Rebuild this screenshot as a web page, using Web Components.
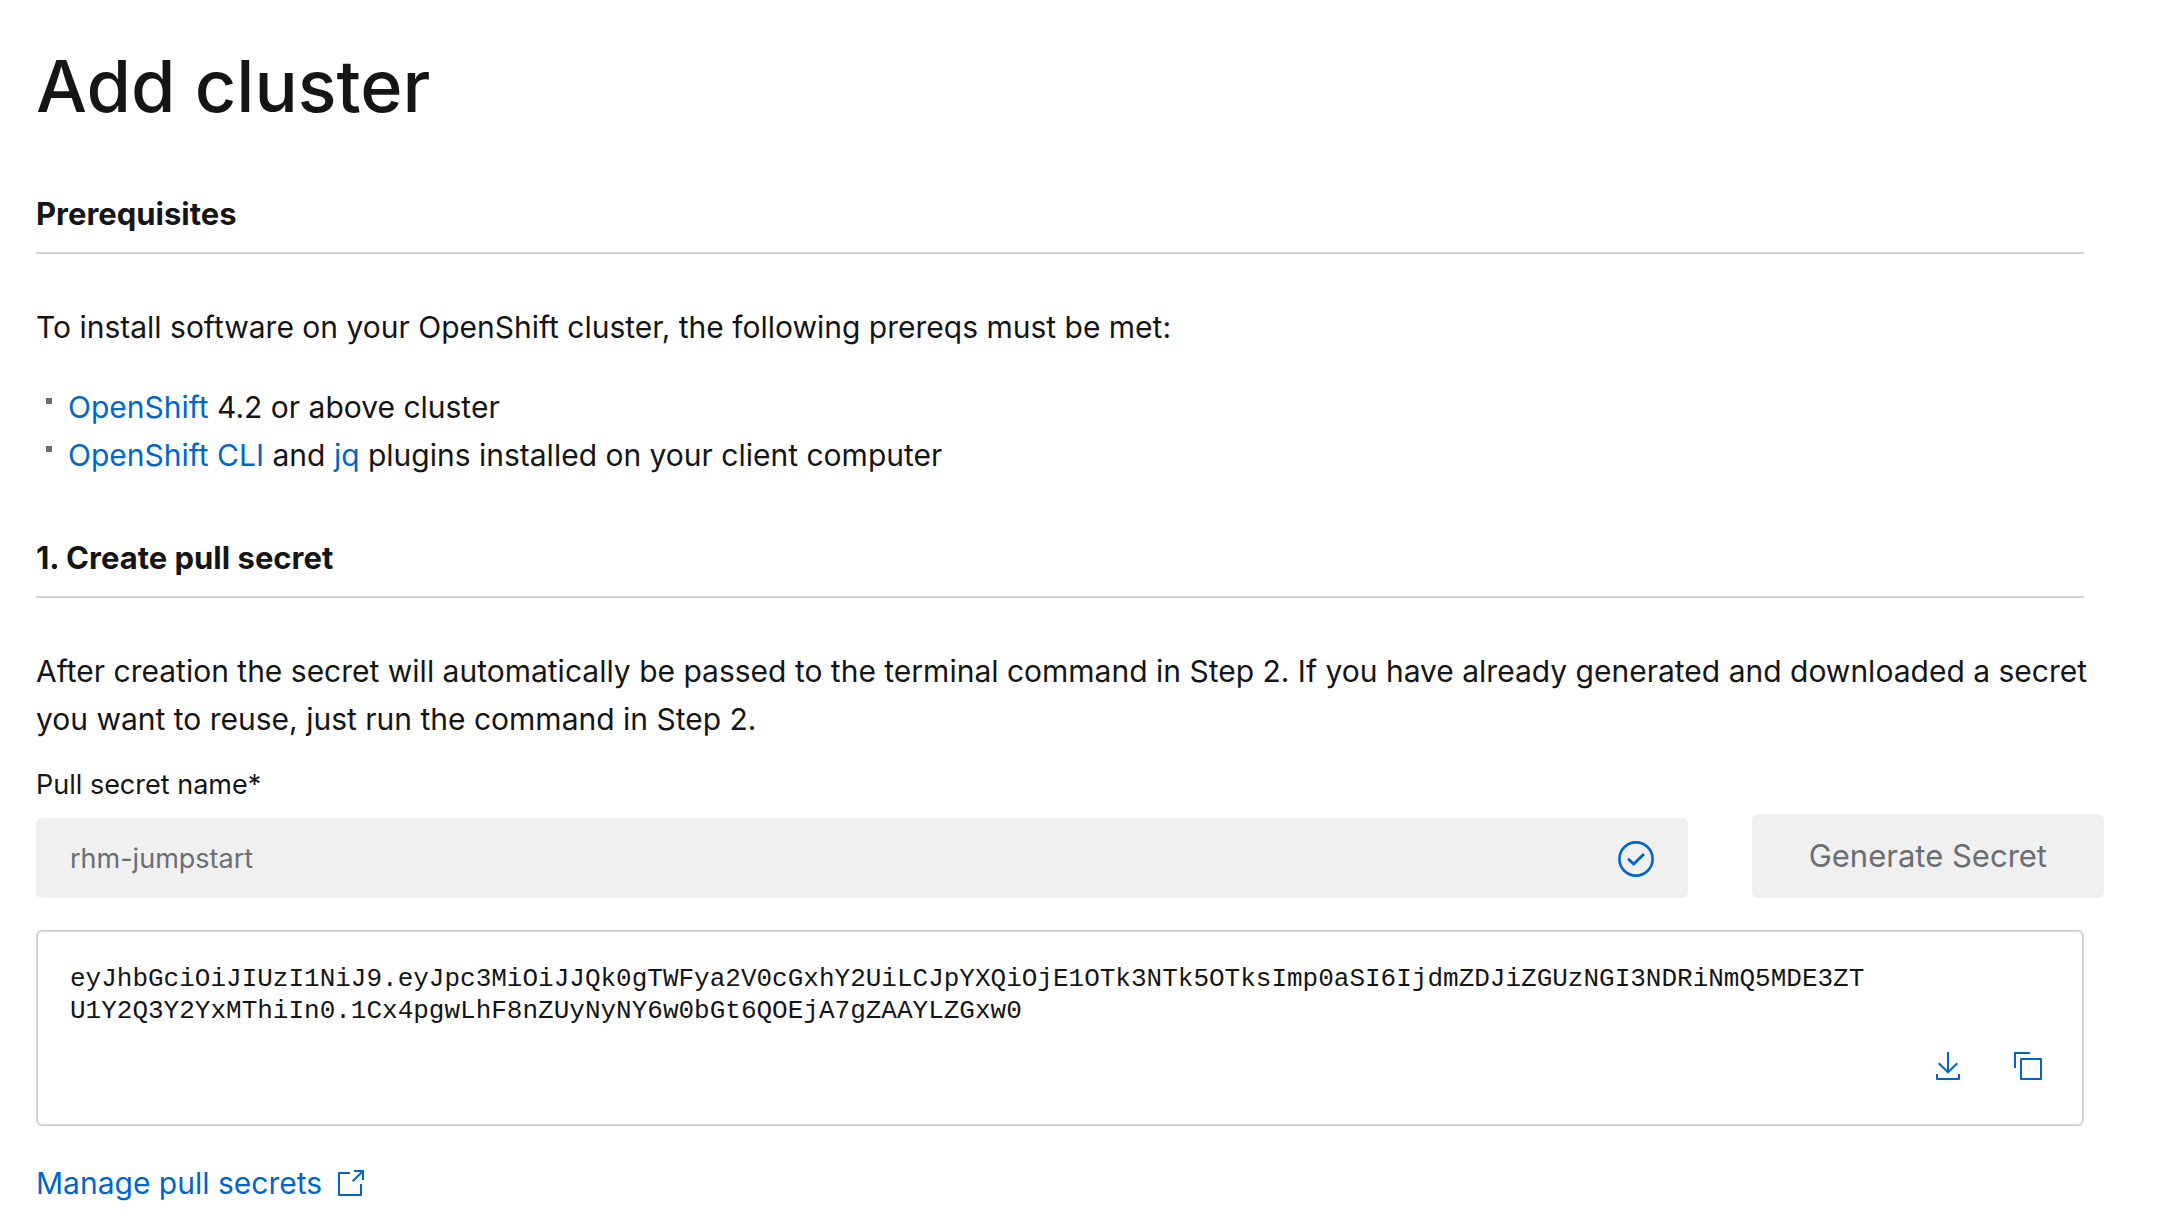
<!DOCTYPE html>
<html lang="en">
<head>
<meta charset="utf-8">
<meta name="viewport" content="width=device-width, initial-scale=1">
<title>Add cluster</title>
<style>
  body {
    margin: 0;
    background: #fff;
    color: #151515;
    font-family: Inter, "Liberation Sans", sans-serif;
    --link: #0066cc;
    --muted: #6a6e73;
    --line: #d2d2d2;
    --disabled: #f0f0f0;
  }
</style>
</head>
<body>
<add-cluster-page></add-cluster-page>

<script>
const define = (name, html) => {
  const template = document.createElement('template');
  template.innerHTML = html;
  customElements.define(name, class extends HTMLElement {
    constructor() {
      super();
      this.attachShadow({ mode: 'open' }).append(template.content.cloneNode(true));
    }
  });
};

define('page-section', `
  <style>
    :host { display: block; }
    h2 { margin: 0 0 49px; padding-bottom: 18px; border-bottom: 2px solid var(--line);
         font-size: 31px; line-height: 40px; font-weight: 700; }
  </style>
  <section>
    <h2><slot name="heading"></slot></h2>
    <slot></slot>
  </section>`);

define('bullet-item', `
  <style>
    :host { display: flex; gap: 16px; padding-left: 10px; }
    .mark { flex: none; width: 6px; height: 6px; margin-top: 15px; background: var(--muted); }
  </style>
  <span class="mark"></span>
  <span><slot></slot></span>`);

define('secret-form', `
  <style>
    :host { display: block; }
    form { display: flex; align-items: flex-end; gap: 64px; margin-right: -20px; }
    .field { flex: 1; min-width: 0; display: flex; flex-direction: column; gap: 15px; }
    label { font-size: 27px; line-height: 36px; }
    .box { display: flex; align-items: center; height: 80px; padding: 0 34px;
           box-sizing: border-box; border-radius: 6px; background: var(--disabled); }
    input { flex: 1; min-width: 0; height: 100%; padding: 0; border: 0; background: none;
            font: 27px Inter, "Liberation Sans", sans-serif; color: var(--muted); }
    svg { flex: none; width: 36px; height: 36px; fill: none; stroke: var(--link); overflow: visible; }
    button { flex: none; height: 84px; padding: 0 57px 2px; border: 0; border-radius: 6px;
             background: var(--disabled); color: var(--muted);
             font: 31px Inter, "Liberation Sans", sans-serif; }
  </style>
  <form>
    <div class="field">
      <label for="secret-name">Pull secret name*</label>
      <div class="box">
        <input id="secret-name" type="text" value="rhm-jumpstart" disabled>
        <svg viewBox="0 0 36 36" aria-hidden="true">
          <circle cx="18" cy="19" r="16.6" stroke-width="2.6"/>
          <path d="M10 18.8l5.7 5.2L26 14" stroke-width="2.8"/>
        </svg>
      </div>
    </div>
    <button type="button" disabled>Generate Secret</button>
  </form>`);

define('secret-output', `
  <style>
    :host { display: block; border: 2px solid var(--line); border-radius: 6px; padding: 31px 38px 42px 32px; }
    code { display: block; max-width: 115ch; word-break: break-all;
           font: 26px/32px "Liberation Mono", monospace; }
    .actions { display: flex; justify-content: flex-end; gap: 48px; margin-top: 23px; }
    button { display: block; padding: 0; border: 0; background: none; cursor: pointer; }
    svg { display: block; width: 32px; height: 32px; fill: none; stroke: var(--link); stroke-width: 2; stroke-linejoin: round; }
  </style>
  <code><slot></slot></code>
  <div class="actions">
    <button type="button" aria-label="Download">
      <svg viewBox="0 0 32 32"><path d="M16 2v20M6.7 13.3L16 22.3l9.3-9M5 24v5h22v-5"/></svg>
    </button>
    <button type="button" aria-label="Copy">
      <svg viewBox="0 0 32 32"><path d="M9 9h20v20H9zM3 18V3h15"/></svg>
    </button>
  </div>`);

define('external-link', `
  <style>
    :host { display: block; }
    a { display: inline-flex; align-items: center; gap: 14px; color: var(--link); text-decoration: none; }
    svg { flex: none; width: 32px; height: 32px; fill: none; stroke: currentColor; stroke-width: 2; }
  </style>
  <a href="#secrets"><slot></slot>
    <svg viewBox="0 0 32 32" aria-hidden="true">
      <path d="M14 6H3v22h22V17" stroke-linejoin="round"/>
      <path d="M18 4h9v9M27 4L16.7 14.3"/>
    </svg>
  </a>`);

define('add-cluster-page', `
  <style>
    :host { display: block; padding: 42px 78px 0 36px; font-size: 30px; line-height: 48px; }
    h1 { margin: 0 0 64px; font-size: 72px; line-height: 88px; font-weight: 500; }
    p { margin: 0 -20px 0 0; }
    a { color: var(--link); text-decoration: none; }
    .list { margin-top: 32px; }
    page-section + page-section { margin-top: 59px; }
    secret-form { margin-top: 24px; }
    secret-output { margin-top: 32px; }
    external-link { margin-top: 33px; }
  </style>
  <main>
    <h1>Add cluster</h1>
    <page-section>
      <span slot="heading">Prerequisites</span>
      <p>To install software on your OpenShift cluster, the following prereqs must be met:</p>
      <div class="list" role="list">
        <bullet-item role="listitem"><a href="#openshift">OpenShift</a> 4.2 or above cluster</bullet-item>
        <bullet-item role="listitem"><a href="#cli">OpenShift CLI</a> and <a href="#jq">jq</a> plugins installed on your client computer</bullet-item>
      </div>
    </page-section>
    <page-section>
      <span slot="heading">1. Create pull secret</span>
      <p>After creation the secret will automatically be passed to the terminal command in Step 2. If you have already generated and downloaded a secret you want to reuse, just run the command in Step 2.</p>
      <secret-form></secret-form>
      <secret-output>eyJhbGciOiJIUzI1NiJ9.eyJpc3MiOiJJQk0gTWFya2V0cGxhY2UiLCJpYXQiOjE1OTk3NTk5OTksImp0aSI6IjdmZDJiZGUzNGI3NDRiNmQ5MDE3ZTU1Y2Q3Y2YxMThiIn0.1Cx4pgwLhF8nZUyNyNY6w0bGt6QOEjA7gZAAYLZGxw0</secret-output>
      <external-link>Manage pull secrets</external-link>
    </page-section>
  </main>`);
</script>
</body>
</html>
